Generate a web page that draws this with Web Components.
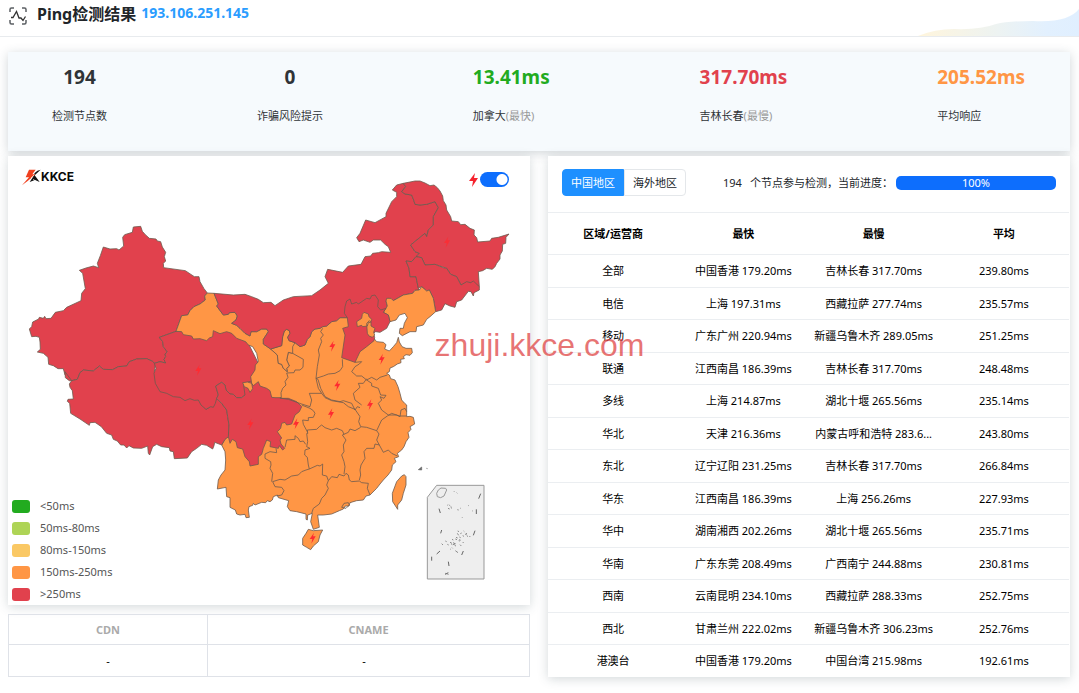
<!DOCTYPE html>
<html lang="zh-CN">
<head>
<meta charset="utf-8">
<title>Ping检测结果</title>
<style>
body{margin:0;background:#fff;color:#000;font:11px/16px "Noto Sans","Noto Sans CJK SC",sans-serif}
</style>
</head>
<body>
<ping-page></ping-page>
<script>
const define = (name, html, setup) => customElements.define(name, class extends HTMLElement {
  constructor() {
    super();
    const t = document.createElement('template');
    t.innerHTML = html;
    this.attachShadow({mode: 'open'}).append(t.content.cloneNode(true));
  }
  connectedCallback() { if (setup) setup.call(this, this.shadowRoot); }
});

define('page-header', `
<style>
:host{display:flex;align-items:center;height:36px;border-bottom:1px solid #e8ebee;padding-left:8px;position:relative}
.icon{width:20px;height:20px;margin-top:-4px;flex:none}
h1{font-size:16px;line-height:22px;margin:0 5px 8px 9px;color:#212529}
a{font-size:14px;line-height:20px;font-weight:700;color:#2a9dff;text-decoration:none;margin-bottom:10px}
.wave{position:absolute;right:0;bottom:0;width:161px;height:28px}
</style>
<svg class="icon" viewBox="0 0 20 20" fill="none" stroke="#5b5f63" stroke-width="1.5" aria-hidden="true">
<path d="M2 6V3.500Q2 2 3.500 2H6M14 2h2.500Q18 2 18 3.500V6M18 14v2.500q0 1.500-1.500 1.500H14M6 18H3.500Q2 18 2 16.500V14"/>
<path d="M3 11.500h2L8.500 5.500 11 12h2l2 2.500 2.500-4" stroke="#333" stroke-width="1.300"/></svg>
<h1>Ping检测结果</h1><a href="#">193.106.251.145</a>
<svg class="wave" viewBox="0 0 161 28" aria-hidden="true"><defs><linearGradient id="g"><stop offset="0" stop-color="#fff5dc"/><stop offset=".5" stop-color="#edf3f2"/><stop offset=".8" stop-color="#e2f0fe"/><stop offset="1" stop-color="#e0efff"/></linearGradient></defs>
<path fill="url(#g)" d="M0 28Q17 21 36 21 62 22 78 16 90 13 115 13 150 15 161 1V28Z"/></svg>`);

define('stat-item', `
<style>
:host{display:block;color:#2f3337}
:host([centered]){text-align:center}
.value{font-size:19px;line-height:26px;font-weight:700;color:var(--tone,#2f3337)}
.label{margin-top:18px;line-height:16px}
::slotted(small){font-size:11px;color:#999}
</style>
<div class="value"><slot name="value"></slot></div><div class="label"><slot></slot></div>`);

define('stat-bar', `
<style>
:host{display:flex;justify-content:space-between;box-sizing:border-box;height:99px;padding:12px 45px 12px 44px;background:#f6fafd;box-shadow:0 2px 10px rgba(60,80,90,.24)}
</style><slot></slot>`);

define('brand-logo', `
<style>
:host{display:flex;align-items:center;color:#0a0a0a;font:700 12px/18px Inter,sans-serif}
svg{width:20px;height:18px}
</style>
<svg viewBox="0 0 60 54" aria-hidden="true"><path fill="#111" d="M41 15Q49 6 59 5L41 22 56 42 42 36 26 42 36 27Z"/><path fill="#f0401f" d="M24 5H44L34 19H44L20 39 3 52 24 28H14Z"/><path stroke="#fff" stroke-width="2" d="M30 30 40 20M36 34l8 5"/></svg><span>KKCE</span>`);

define('flash-switch', `
<style>
:host{display:block}
label{display:flex;align-items:center;gap:2px}
svg{width:9px;height:14px}
input{appearance:none;margin:0;width:29px;height:15px;border-radius:8px;background:radial-gradient(circle at 7px 50%,#fff 5px,transparent 6px),#aaa}
input:checked{background:radial-gradient(circle at 22px 50%,#fff 5px,transparent 6px),#0d6efd}
</style>
<label aria-label="闪电"><svg viewBox="0 0 9 14" aria-hidden="true"><path fill="#f5222d" d="M6 0 0 8H4L3 14 9 5H5Z"/></svg><input type="checkbox" role="switch" checked></label>`);

define('latency-legend', `
<style>
ul{list-style:none;margin:0;padding:0;color:#555}
li{display:flex;align-items:center;gap:10px;height:22px}
i{width:18px;height:13px;border-radius:3px;background:var(--c)}
</style>
<ul><li><i style="--c:#22ab1f"></i>&lt;50ms</li><li><i style="--c:#aed456"></i>50ms-80ms</li><li><i style="--c:#fac864"></i>80ms-150ms</li><li><i style="--c:#ff9645"></i>150ms-250ms</li><li><i style="--c:#e1414d"></i>&gt;250ms</li></ul>`);

define('china-map', `
<style>
:host{display:block}
svg{display:block;width:100%;height:auto}
.p{stroke:#6d5a4e;stroke-width:2.400;stroke-linejoin:round}
.o{fill:#ff9645}.r{fill:#e1414d}.n{fill:none}
</style>
<svg viewBox="24 468 1566 1347" role="img" aria-label="中国地图">
<defs><path id="b" d="M4-16-9 3H-1L-4 17 9-5H1Z"/></defs>
<g class="p">
<path class="o" d="M812 1047 845 1037 848 1010 853 993 860 988 868 992 870 1000 863 1012 867 1022 885 1028 900 1040 915 1035 922 1018 930 1010 935 995 945 987 960 985 968 980 980 978 995 965 1010 962 1020 953 1042 953 1120 990V1013L1130 1025 1150 1027 1158 1034 1154 1047 1168 1053 1180 1040 1190 1028 1195 1012 1198 1026 1206 1040 1218 1045 1235 1045 1237 1058 1230 1066 1218 1064 1210 1070 1213 1076 1202 1078 1203 1088 1192 1092 1180 1100 1170 1104 1168 1115 1160 1120 1168 1125 1172 1136 1185 1140 1194 1160 1200 1180 1205 1200 1214 1210 1220 1215V1250L1230 1249 1240 1252 1244 1272 1230 1280 1233 1288 1224 1298 1227 1312 1218 1325 1212 1340 1205 1350 1192 1360 1196 1370 1183 1375 1188 1385 1177 1395 1175 1410 1164 1425 1150 1440 1140 1452 1130 1465 1110 1485 1098 1488 1090 1500 1070 1502 1050 1508 1047 1518 1036 1518 1030 1527 1018 1532 995 1542 970 1545 953 1545 958 1582 940 1588 932 1565 937 1540 923 1545 922 1560 918 1558V1542L890 1535 870 1532 862 1520 866 1502 835 1493 832 1485 820 1490 817 1500 810 1505 802 1502 797 1508 785 1507 765 1515 760 1510 758 1516 747 1520 745 1530 748 1552 738 1553 735 1543 720 1545 710 1542 706 1530 690 1522 690 1493 680 1490 678 1462 652 1467 655 1440 663 1425 675 1410 677 1380 675 1355 665 1335 685 1300Z"/>
<path class="r" d="M622 879 612 866 600 845 597 830 583 830 556 812 491 803 490 790 497 783 493 770 497 757 487 741 482 725 472 723 468 717 448 715 436 704 427 694 422 679 400 681 397 697 374 704 368 712 371 738 357 750 350 746 330 747 310 741 301 767 292 790 296 803 280 798 258 804 238 811 248 820 256 866 245 880 243 902 200 922 190 932 166 937 153 955 138 956 134 949 130 955 118 952 116 957 98 966 95 980 88 987 95 1010 108 1009 118 1012 120 1026 121 1048 112 1056 130 1060 144 1072 146 1093 160 1097 174 1106 190 1106 195 1125 215 1142 232 1138 240 1118 250 1110 280 1113 298 1098 310 1108 338 1109 355 1100 380 1098 388 1085 410 1077 440 1076 458 1084 463 1090 480 1085 497 1089 492 1078 497 1070 495 1062 502 1056 490 1040 488 1025 478 1012 528 994 545 947 563 945 570 932 582 920 600 912 616 900 614 888Z"/>
<path class="r" d="M195 1115 196 1133 208 1142 215 1142 208 1152 210 1162 217 1172 220 1197 204 1198 202 1204 209 1210 212 1240 240 1257 268 1276 270 1268 285 1267 304 1280 320 1300 335 1305 340 1318 352 1323 362 1335 372 1335 380 1344 387 1337 400 1344 425 1345 443 1338 445 1360 449 1365 458 1340 470 1333 485 1340 508 1343 510 1353 520 1355 523 1376 562 1374 575 1355 590 1345 605 1333 620 1336 638 1347 642 1337 644 1327 665 1335 675 1318 686 1310 687 1275 683 1250 680 1230 665 1210 650 1195 632 1220 618 1228 595 1200 463 1115 466 1095 463 1090 458 1084 440 1076 410 1077 388 1085 380 1098 355 1100 338 1109 310 1108 298 1098 280 1113 250 1110 240 1118 232 1138 215 1142Z"/>
<path class="r" d="M528 994 478 1012 488 1025 490 1040 502 1056 495 1062 497 1070 492 1078 497 1089 480 1085 463 1090 468 1105 462 1120 466 1150 480 1175 500 1180 520 1190 540 1192 555 1202 570 1196 583 1201 595 1200 603 1215 618 1228 632 1220 640 1222 646 1210 650 1195 655 1185 647 1158 665 1147 675 1155 678 1170 690 1182 700 1183 710 1193 725 1193 735 1185 752 1175 780 1100 745 1030 680 990Z"/>
<path class="r" d="M650 1195 665 1210 680 1230 683 1250 687 1275 685 1310 690 1330 697 1318 708 1325 712 1343 728 1347 735 1370 748 1385 750 1398 775 1393V1370L785 1363 790 1345 800 1320 812 1325 810 1340 835 1345 838 1337 848 1350 854 1345 843 1332 840 1320 845 1314 832 1295 842 1285 845 1270 855 1267 860 1275 875 1272 885 1245 898 1235 905 1220 890 1205 865 1195 840 1195 800 1130 730 1150 735 1185 725 1193 710 1193 700 1183 690 1182 678 1170 675 1155 665 1147 647 1158 655 1185Z"/>
<path class="o" d="M622 879 642 880 655 912 650 918 670 945 685 943 688 938 705 937 712 948 708 960 695 970 710 976 720 985 735 1000 750 1008 753 995 770 995 785 987 800 987 805 995 790 1018 790 1032 812 1047 832 1065 835 1090 845 1093 850 1105 862 1115 860 1105 868 1098 860 1080 865 1057 878 1060 910 1078 909 1102 900 1110 885 1110 882 1118 860 1119 864 1132 855 1145 858 1155 848 1165 843 1178 844 1193 825 1193 815 1192 810 1172 800 1165 780 1158 775 1145 760 1157 755 1150 758 1166 750 1177 744 1165 733 1160 728 1148 742 1146 755 1150 752 1130 765 1110 766 1095 775 1085 770 1060 758 1040 745 1035 737 1025 710 1015 695 1000 680 995 660 1001 640 992 638 1010 628 1014 620 1022 600 1016 580 1017 575 1008 550 1004 545 995 528 994 545 947 563 945 570 932 582 920 600 912 616 900 614 888Z"/>
<path class="o" d="M812 1047 845 1037 848 1010 853 993 860 988 868 992 870 1000 863 1012 867 1022 885 1028 878 1040 878 1060 865 1057 860 1080 868 1098 860 1105 862 1115 850 1105 845 1093 835 1090 832 1065Z"/>
<path class="r" d="M642 880 700 885 735 883 755 890 775 898 790 908 813 907 825 917 850 900 880 890 935 887 960 870 985 850 975 830 983 808 1028 817 1045 798 1083 793 1095 770 1112 768 1118 760 1135 758 1145 755 1172 757 1165 740 1155 733 1142 720 1120 720 1110 727 1090 720 1077 725 1070 713 1080 700 1097 660 1125 668 1158 650 1158 640 1175 605 1190 590 1190 577 1177 570 1190 555 1210 550 1217 560 1205 575 1215 582 1235 585 1241 600 1245 613 1260 615 1280 613 1305 605 1315 623 1300 650 1300 675 1285 690 1280 710 1275 700 1232 735 1245 755 1258 760 1248 770 1235 785 1218 783 1227 805 1230 830 1248 830 1255 865 1258 870 1245 871 1238 880 1210 885 1180 902 1165 895 1158 903 1162 918 1150 940 1120 910 1042 953 1020 953 1010 962 995 965 980 978 968 980 960 985 945 987 935 995 930 1010 922 1018 915 1035 900 1040 885 1028 867 1022 863 1012 870 1000 868 992 860 988 853 993 848 1010 845 1037 812 1047 790 1032 790 1018 805 995 800 987 785 987 770 995 753 995 750 1008 735 1000 720 985 710 976 695 970 708 960 712 948 705 937 688 938 685 943 670 945 650 918 655 912Z"/>
<path class="r" d="M1210 550 1245 543 1260 543 1275 549 1290 557 1302 555 1312 563 1320 573 1328 588 1330 602 1338 615 1340 630 1352 650 1355 663 1375 665 1382 674 1395 673 1410 685 1423 690 1422 705 1430 713 1433 726 1470 723 1475 715 1495 712 1527 702 1518 712 1517 730 1508 733 1507 753 1500 765 1500 777 1490 790 1485 800 1477 808 1460 805 1448 812 1435 815 1438 860 1420 850 1400 848 1383 855 1370 830 1352 823 1340 805 1305 793 1275 795 1265 773 1248 770 1258 760 1245 755 1232 735 1275 700 1280 710 1285 690 1300 675 1300 650 1315 623 1305 605 1280 613 1260 615 1245 613 1241 600 1235 585 1215 582 1205 575 1217 560Z"/>
<path class="r" d="M1248 770 1265 773 1275 795 1305 793 1330 803 1340 805 1352 823 1370 830 1383 855 1400 845 1412 848 1420 843 1438 860 1438 870 1422 878 1420 888 1413 875 1405 874 1385 900 1370 905 1365 922 1350 918 1335 911 1325 930 1307 935 1300 895 1288 870 1280 873 1265 860 1255 865 1250 840 1248 830 1230 830 1227 805 1218 783 1235 785Z"/>
<path class="o" d="M1307 935 1300 895 1288 870 1280 873 1265 860 1258 870 1245 871 1238 880 1210 885 1180 902 1173 895 1160 895 1158 903 1162 918 1150 937 1165 945 1170 965 1188 960 1198 945 1215 940 1222 953 1213 970 1210 985 1200 985 1198 1000 1207 1007 1230 995 1248 995 1250 980 1270 975 1280 958 1290 950Z"/>
<path class="r" d="M1042 953 1033 940 1035 920 1040 903 1050 897 1055 912 1070 907 1075 912 1100 895 1110 897 1115 887 1125 885 1135 900 1133 920 1142 930 1158 925 1150 937 1165 945 1170 965 1160 985 1140 997 1127 995 1120 1000 1124 1012 1122 1022 1100 1040 1080 1055 1073 1070 1065 1087 1025 1073 1035 1005 1028 985 1045 980Z"/>
<path class="o" d="M1070 965 1085 955 1087 943 1092 937 1105 942 1107 950 1115 958 1112 967 1105 968 1102 978 1088 980 1085 976 1072 980ZM1100 970 1108 962 1113 967 1113 978 1125 985 1121 997 1124 1005 1117 1012 1107 1008 1102 1000Z"/>
<path class="o" d="M925 1588 940 1592 968 1590 960 1605 955 1625 940 1638 932 1649 920 1642 908 1635V1615L918 1600ZM1205 1428 1213 1424 1218 1430V1455L1210 1480 1205 1500 1193 1515V1528L1178 1505 1177 1480 1190 1445Z"/>
<g class="n" transform="translate(900 900)">
<path d="M68 85 62 95 70 105 62 115 65 125 55 150 58 165 52 200 48 235 70 228 85 222 105 220 120 212 128 200 127 178M48 235 54 238 62 265 75 290 95 300 120 305 130 302 155 310 165 330 172 320 180 323M165 187 185 185 178 192 165 200 155 215 170 228 185 228 200 240 215 232 230 240 240 232 262 225M200 236 190 250 175 250 180 262 160 280 165 300 185 315M200 240 215 250 215 258 235 265 242 285 258 286 252 295 240 290 245 300 235 310 245 330 265 345 290 345 300 350 303 330 315 325 320 335"/>
</g>
<g class="n" transform="translate(780 1110)">
<path d="M60 82 65 85 85 88 125 102 150 110 155 90 148 70 185 70M168 25 175 55 185 70 195 83 215 92 250 98 265 110 285 118 300 140 296 155 302 170 320 172 350 182 365 150 382 138 395 130 418 138 440 138M350 182 357 192 350 210 358 225 370 247 385 240 395 250 412 258M358 225 345 222 342 235 320 235 312 245 315 265 303 285 300 300 302 315 298 330M302 172 285 182 270 177 265 187 247 195 258 210 250 225 252 245 245 255 252 275 255 290 252 312M205 332 215 320 232 323 237 313 252 318 258 310 265 315 268 330 275 335 298 333 305 338 325 340 322 355 330 375M205 332 200 345 205 355 195 375 185 385 178 402 160 415 155 430M148 297 172 286 180 288 188 282 187 315 200 318 205 332M148 297 138 300 125 305 115 315 95 318 75 330 60 328 38 335 45 350 65 352 72 362 65 375 50 378M140 190 143 215 140 230 150 235 135 240 134 255 142 262 145 285 148 297M75 232 80 210 105 208 105 197 115 205 120 215 130 213 137 223M48 235 50 248 30 245 15 252 15 265 32 275 33 285 30 295 38 310 35 335M143 192 142 180 170 178 178 170 185 165 195 173 215 180 230 175 247 182 252 193M125 105 150 115 160 122 165 130 160 142 145 143 145 152 128 150 130 163 143 187M245 412 252 400 265 398 268 405 258 415Z"/>
</g></g>
<g transform="translate(780 1110)" fill="none">
<path d="M530 346H672V627H502V382Z" fill="#eee" stroke="#999" stroke-width="3"/>
<path d="M535 360 543 354 557 355 560 360 552 378 542 383 532 380 530 370Z" stroke="#999" stroke-width="3"/>
<path d="M662 371 656 386M649 418V432M537 416 541 429M545 480 542 490M645 482 640 496M515 560V572M540 543 530 552M610 543 605 555M565 575 567 588M565 608 555 613" stroke="#666" stroke-width="3"/>
<path d="M562 405l2 2m3-3 2 3m3 5 4 3m-12 0 5 2m3-8 2 1m18 9 4 1m4-6 2 1m22-9 2 1m10 15 2 1m-32 18 1 2m-14 40 4 2m4 6 4-2m6-6 2 2m2 8 5-1m-32 10 5 2m5-3 4 2m6-6 4 2m8-3 4 4m-48 8 4 2m6-3 5 2m5 3 4 1m-44 0 4 2m2 8 4 2m4-8 5 2m4-1 6 3m-6 3 8-3m-14 0 4 3m-32-3 4 4m22 12 2 2m3-6 2 2M582 364l2 2M590 368l2 2M592 490l4 6M586 542l8 6M618 490l3 2M628 498l3 3M598 508l4 3M608 516l3 3M556 610l10 3M584 526l4 2M600 524l4 4" stroke="#777" stroke-width="2.500"/>
<path d="M475 299 485 291V300ZM499 295l4 1" stroke="#666" stroke-width="2" fill="#666"/>
</g>
<g fill="#ff2b31">
<use href="#b" x="1341" y="726" opacity=".8"/><use href="#b" x="595" y="1110"/><use href="#b" x="751" y="1272"/>
<use href="#b" x="997" y="1038"/><use href="#b" x="1145" y="1077"/><use href="#b" x="1012" y="1156"/><use href="#b" x="1110" y="1214"/><use href="#b" x="993" y="1241"/><use href="#b" x="888" y="1271"/><use href="#b" x="938" y="1614"/></g>
</svg>`);

define('map-card', `
<style>
:host{display:grid;background:#fff;box-shadow:0 2px 10px rgba(60,80,90,.22)}
:host>*{grid-area:1/1}
china-map,brand-logo,flash-switch,latency-legend{grid-area:1/1}
brand-logo{place-self:start;margin:12px 13px}
flash-switch{place-self:start end;margin:16px 21px}
latency-legend{place-self:end start;margin:0 4px}
</style>
<china-map></china-map><brand-logo></brand-logo><flash-switch></flash-switch><latency-legend></latency-legend>`);

define('cdn-table', `
<style>
:host{display:block}
table{width:100%;border-collapse:collapse;table-layout:fixed;text-align:center}
th,td{border:1px solid #dfe2e8;padding:0}
th{height:29px;color:#aaa}td{height:31px}
th:first-child{width:38%}
td:last-child{padding-right:9px}
</style>
<table><thead><tr><th>CDN</th><th>CNAME</th></tr></thead><tbody><tr><td>-</td><td>-</td></tr></tbody></table>`);

define('region-toolbar', `
<style>
:host{display:flex;align-items:center;padding:13px 14px 16px 14px;color:#212529}
.tabs{display:flex;flex:none}
button{font:inherit;height:27px;width:62px;padding:0;border:1px solid #e4e7ea;background:#fff;color:#212529;border-radius:0 4px 4px 0}
button.on{background:#1e90ff;border-color:#1e90ff;color:#fff;border-radius:4px 0 0 4px}
.count{margin:0 8px 0 37px}
.bar{flex:1;margin-left:3px;height:14px;line-height:14px;border-radius:5px;background:#0d6efd;color:#fff;text-align:center}
.text{white-space:nowrap}
</style>
<div class="tabs"><button class="on" type="button">中国地区</button><button type="button">海外地区</button></div>
<span class="count">194</span><span class="text">个节点参与检测，当前进度：</span><div class="bar" role="progressbar" aria-label="当前进度" aria-valuenow="100">100%</div>`);

const ROWS = [
['全部','中国香港 179.20ms','吉林长春 317.70ms','239.80ms'],['电信','上海 197.31ms','西藏拉萨 277.74ms','235.57ms'],
['移动','广东广州 220.94ms','新疆乌鲁木齐 289.05ms','251.25ms'],['联通','江西南昌 186.39ms','吉林长春 317.70ms','248.48ms'],
['多线','上海 214.87ms','湖北十堰 265.56ms','235.14ms'],['华北','天津 216.36ms','内蒙古呼和浩特 283.6...','243.80ms'],
['东北','辽宁辽阳 231.25ms','吉林长春 317.70ms','266.84ms'],['华东','江西南昌 186.39ms','上海 256.26ms','227.93ms'],
['华中','湖南湘西 202.26ms','湖北十堰 265.56ms','235.71ms'],['华南','广东东莞 208.49ms','广西南宁 244.88ms','230.81ms'],
['西南','云南昆明 234.10ms','西藏拉萨 288.33ms','252.75ms'],['西北','甘肃兰州 222.02ms','新疆乌鲁木齐 306.23ms','252.76ms'],
['港澳台','中国香港 179.20ms','中国台湾 215.98ms','192.61ms']];

define('region-table', `
<style>
:host{display:block;padding-right:1px}
table{width:100%;border-collapse:collapse;table-layout:fixed;text-align:center}
th,td{padding:0;border-top:1px solid #ebeef1;white-space:nowrap}
th{height:41px}
td{height:31px}
tr:nth-child(odd) td{height:32px}
</style>
<table><thead><tr><th>区域/运营商</th><th>最快</th><th>最慢</th><th>平均</th></tr></thead><tbody></tbody></table>`, function (root) {
  const body = root.querySelector('tbody');
  for (const row of ROWS) {
    const tr = body.insertRow();
    for (const text of row) tr.insertCell().textContent = text;
  }
});

define('region-card', `
<style>:host{display:block;background:#fff;box-shadow:0 2px 10px rgba(60,80,90,.22)}</style>
<region-toolbar></region-toolbar><region-table></region-table>`);

define('water-mark', `
<style>:host{position:absolute;inset:0;display:flex;align-items:center;justify-content:center;box-sizing:border-box;padding-bottom:4px;pointer-events:none;font:32px/36px "Liberation Sans",sans-serif;color:rgba(222,62,62,.72)}</style><slot></slot>`);

define('ping-page', `
<style>
:host{display:block;position:relative;min-height:100vh}
main{padding:15px 9px 0 8px;display:grid;gap:5px}
.cols{display:grid;grid-template-columns:1fr 1fr;gap:18px;align-items:start}
.left{display:grid;gap:9px}
</style>
<page-header></page-header>
<main>
<stat-bar>
<stat-item centered><span slot="value">194</span>检测节点数</stat-item>
<stat-item centered><span slot="value">0</span>诈骗风险提示</stat-item>
<stat-item style="--tone:#22ab1f"><span slot="value">13.41ms</span>加拿大<small>(最快)</small></stat-item>
<stat-item style="--tone:#e1414d"><span slot="value">317.70ms</span>吉林长春<small>(最慢)</small></stat-item>
<stat-item style="--tone:#ff9645"><span slot="value">205.52ms</span>平均响应</stat-item>
</stat-bar>
<div class="cols"><div class="left"><map-card></map-card><cdn-table></cdn-table></div><region-card></region-card></div>
</main>
<water-mark>zhuji.kkce.com</water-mark>`);
</script>
</body>
</html>
